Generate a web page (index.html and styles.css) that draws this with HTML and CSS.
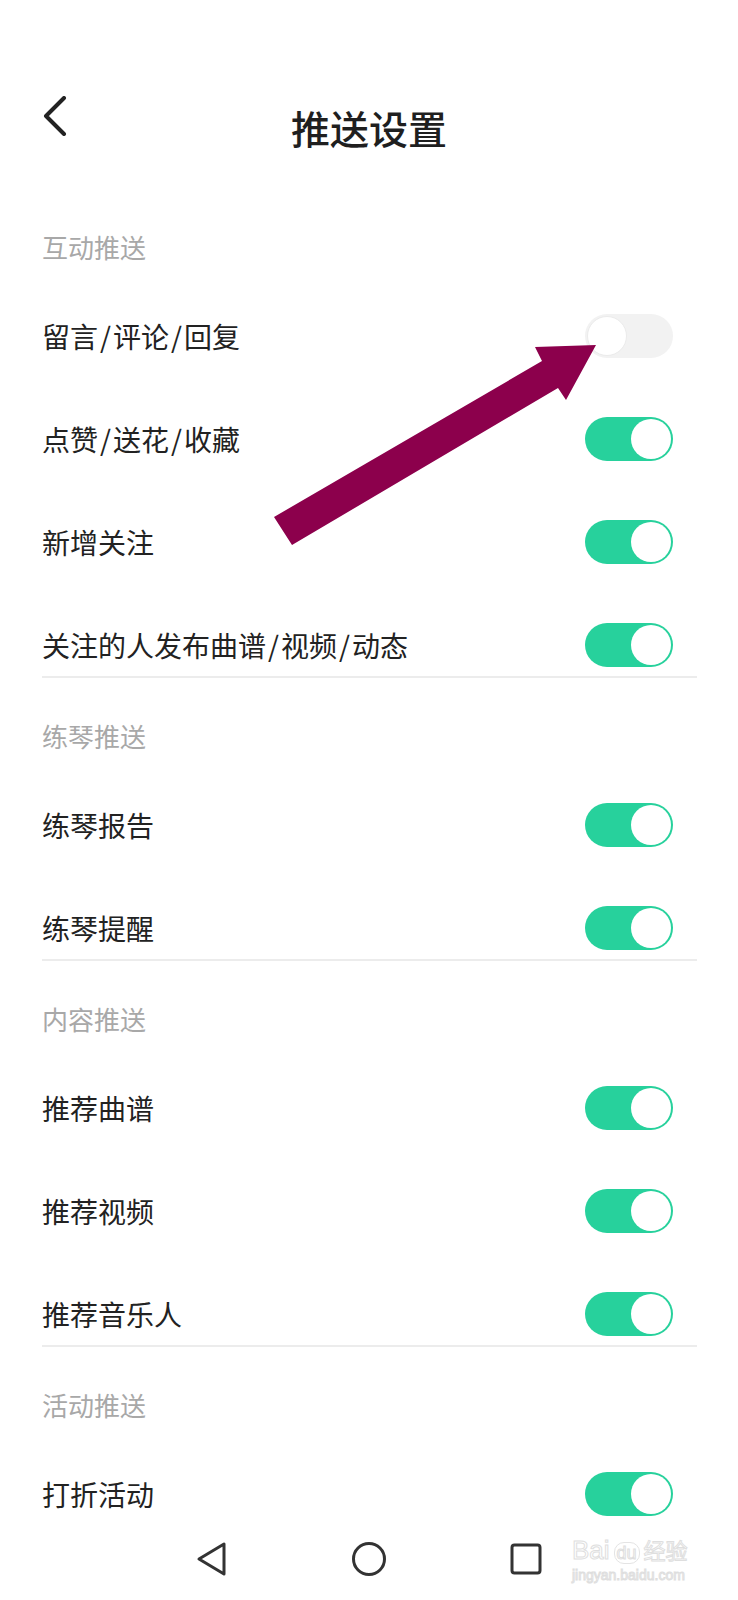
FILE: index.html
```html
<!DOCTYPE html>
<html lang="zh-CN">
<head>
<meta charset="utf-8">
<title>推送设置</title>
<link rel="stylesheet" href="styles.css">
</head>
<body>
<div class="page">
  <header class="topbar">
    <svg class="back" width="26" height="40" viewBox="0 0 26 40"><path d="M22 2 L4 20 L22 38" fill="none" stroke="#222" stroke-width="4" stroke-linecap="round" stroke-linejoin="round"/></svg>
    <h1 class="title">推送设置</h1>
    <span></span>
  </header>

  <section class="group">
    <div class="group-label">互动推送</div>
    <div class="rows">
      <div class="row"><span class="label">留言<span class="sep">/</span>评论<span class="sep">/</span>回复</span><span class="switch off"><span class="knob"></span></span></div>
      <div class="row"><span class="label">点赞<span class="sep">/</span>送花<span class="sep">/</span>收藏</span><span class="switch"><span class="knob"></span></span></div>
      <div class="row"><span class="label">新增关注</span><span class="switch"><span class="knob"></span></span></div>
      <div class="row"><span class="label">关注的人发布曲谱<span class="sep">/</span>视频<span class="sep">/</span>动态</span><span class="switch"><span class="knob"></span></span></div>
    </div>
  </section>

  <section class="group">
    <div class="group-label">练琴推送</div>
    <div class="rows">
      <div class="row"><span class="label">练琴报告</span><span class="switch"><span class="knob"></span></span></div>
      <div class="row"><span class="label">练琴提醒</span><span class="switch"><span class="knob"></span></span></div>
    </div>
  </section>

  <section class="group">
    <div class="group-label">内容推送</div>
    <div class="rows">
      <div class="row"><span class="label">推荐曲谱</span><span class="switch"><span class="knob"></span></span></div>
      <div class="row"><span class="label">推荐视频</span><span class="switch"><span class="knob"></span></span></div>
      <div class="row"><span class="label">推荐音乐人</span><span class="switch"><span class="knob"></span></span></div>
    </div>
  </section>

  <section class="group last">
    <div class="group-label">活动推送</div>
    <div class="rows">
      <div class="row"><span class="label">打折活动</span><span class="switch"><span class="knob"></span></span></div>
    </div>
  </section>

  <svg class="annotation" width="738" height="1600" viewBox="0 0 738 1600">
    <polygon points="596,345 535,347 542,361 274,517 292,545 558,388 566,400" fill="#8c004c"/>
  </svg>

  <div class="watermark">
    <div class="wm-main"><span class="wm-bai">Bai</span><span class="wm-du">du</span><span class="wm-cn">经验</span></div>
    <div class="wm-url">jingyan.baidu.com</div>
  </div>

  <nav class="navbar">
    <svg width="34" height="36" viewBox="0 0 34 36"><path d="M4 18 L29 3 L29 33 Z" fill="none" stroke="#333" stroke-width="3" stroke-linejoin="round"/></svg>
    <svg width="34" height="36" viewBox="0 0 34 36"><circle cx="17" cy="18" r="15.5" fill="none" stroke="#333" stroke-width="3"/></svg>
    <svg width="34" height="36" viewBox="0 0 34 36"><rect x="3" y="4" width="28" height="28" rx="2.5" fill="none" stroke="#333" stroke-width="3"/></svg>
  </nav>
</div>
</body>
</html>
```

FILE: styles.css
```css
html, body {
  margin: 0;
  padding: 0;
  background: #ffffff;
}

.page {
  position: relative;
  width: 738px;
  height: 1600px;
  overflow: hidden;
  font-family: "Noto Sans CJK SC", "Noto Sans", sans-serif;
  color: #222222;
}

.topbar {
  display: grid;
  grid-template-columns: 1fr auto 1fr;
  align-items: start;
  padding: 96px 42px 25px 42px;
}

.back {
  display: block;
  justify-self: start;
}

.title {
  margin: -3px 0 3px 0;
  font-size: 39px;
  line-height: 68px;
  font-weight: 500;
  color: #1f1f1f;
}

.group {
  margin: 38px 41px 0 42px;
  border-bottom: 2px solid #ececec;
}

.group.last {
  border-bottom: none;
}

.group-label {
  font-size: 26px;
  line-height: 40px;
  color: #a8a8a8;
}

.rows {
  display: flex;
  flex-direction: column;
  gap: 41px;
  margin-top: 38px;
}

.row {
  height: 62px;
  display: flex;
  align-items: center;
  justify-content: space-between;
  padding-right: 24px;
}

.label {
  font-size: 28px;
  color: #222222;
}

.sep {
  margin: 0 2px;
}

.switch {
  width: 88px;
  height: 44px;
  border-radius: 22px;
  background: #27d19c;
  display: flex;
  align-items: center;
  justify-content: flex-end;
  padding: 0 2px;
  box-sizing: border-box;
}

.knob {
  width: 40px;
  height: 40px;
  border-radius: 50%;
  background: #ffffff;
}

.switch.off {
  background: #f2f2f2;
  justify-content: flex-start;
}

.switch.off .knob {
  box-sizing: border-box;
  border: 1px solid #ebebeb;
}

.annotation {
  position: absolute;
  top: 0;
  left: 0;
  pointer-events: none;
}

.navbar {
  position: absolute;
  left: 0;
  bottom: 0;
  width: 100%;
  height: 82px;
  display: flex;
  align-items: center;
  justify-content: center;
  gap: 123px;
}

.navbar svg {
  display: block;
}

.watermark {
  position: absolute;
  left: 572px;
  top: 1534px;
  font-family: "Liberation Sans", "Noto Sans CJK SC", sans-serif;
  color: transparent;
  -webkit-text-stroke: 1px #dedede;
  pointer-events: none;
}

.wm-main {
  display: flex;
  align-items: baseline;
  gap: 4px;
  font-size: 26px;
  line-height: 30px;
}

.wm-du {
  font-size: 18px;
  border: 1.5px solid #e4e4e4;
  border-radius: 10px;
  padding: 0 2px;
  line-height: 20px;
}

.wm-cn {
  font-family: "Noto Sans CJK SC", sans-serif;
  font-size: 22px;
}

.wm-url {
  font-size: 14px;
  line-height: 16px;
  margin-top: 2px;
}
```
